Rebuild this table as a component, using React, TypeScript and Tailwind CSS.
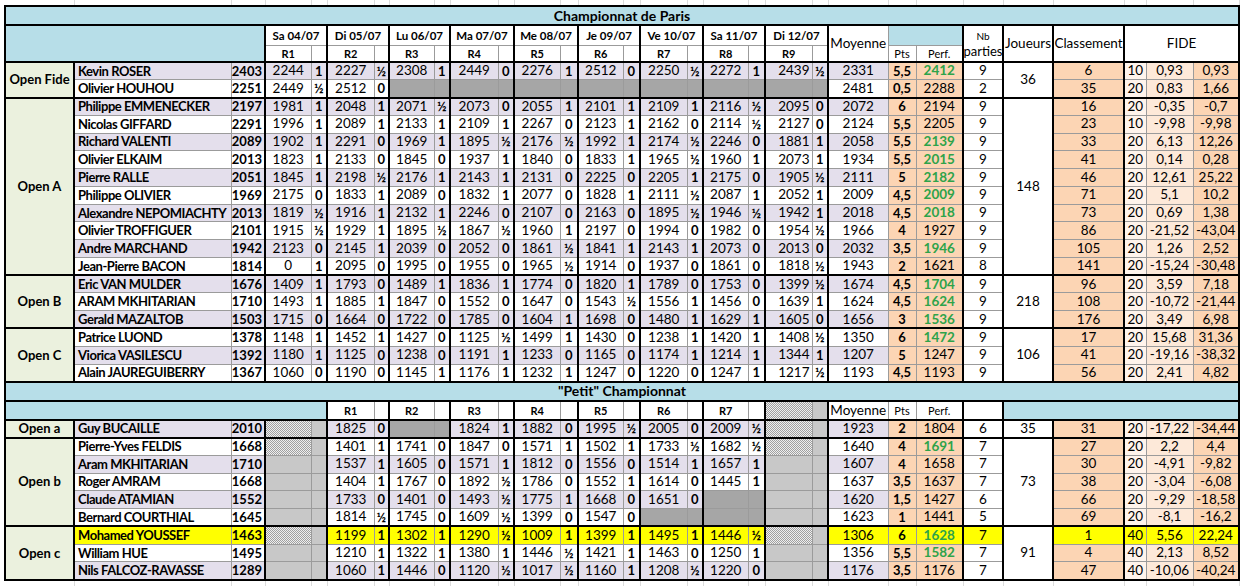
type Cell = [string, string] | 'g' | 'd';

interface Player {
  n: string;
  e: string;
  r: Cell[];
  m: string;
  pts: string;
  perf: string;
  gr?: boolean;
  nb: string;
  cl: string;
  k: string;
  d: string;
  t: string;
  y?: boolean;
}

interface Group {
  label: string;
  j: string;
  ps: Player[];
}

// "2244 1|2227 ½|g|d" -> rounds
function rr(s: string): Cell[] {
  return s.split('|').map((x) => {
    if (x === 'g' || x === 'd') return x;
    const [a, b] = x.split(' ');
    return [a, b];
  });
}

function pl(
  n: string,
  e: string,
  r: string,
  m: string,
  pts: string,
  perf: string,
  gr: boolean,
  nb: string,
  cl: string,
  k: string,
  d: string,
  t: string,
  y = false
): Player {
  return { n, e, r: rr(r), m, pts, perf, gr, nb, cl, k, d, t, y };
}

const main: Group[] = [
  {
    label: 'Open Fide',
    j: '36',
    ps: [
      pl('Kevin ROSER', '2403', '2244 1|2227 ½|2308 1|2449 0|2276 1|2512 0|2250 ½|2272 1|2439 ½', '2331', '5,5', '2412', true, '9', '6', '10', '0,93', '0,93'),
      pl('Olivier HOUHOU', '2251', '2449 ½|2512 0|g|g|g|g|g|g|g', '2481', '0,5', '2288', false, '2', '35', '20', '0,83', '1,66'),
    ],
  },
  {
    label: 'Open A',
    j: '148',
    ps: [
      pl('Philippe EMMENECKER', '2197', '1981 1|2048 1|2071 ½|2073 0|2055 1|2101 1|2109 1|2116 ½|2095 0', '2072', '6', '2194', false, '9', '16', '20', '-0,35', '-0,7'),
      pl('Nicolas GIFFARD', '2291', '1996 1|2089 1|2133 1|2109 1|2267 0|2123 1|2162 0|2114 ½|2127 0', '2124', '5,5', '2205', false, '9', '23', '10', '-9,98', '-9,98'),
      pl('Richard VALENTI', '2089', '1902 1|2291 0|1969 1|1895 ½|2176 ½|1992 1|2174 ½|2246 0|1881 1', '2058', '5,5', '2139', true, '9', '33', '20', '6,13', '12,26'),
      pl('Olivier ELKAIM', '2013', '1823 1|2133 0|1845 0|1937 1|1840 0|1833 1|1965 ½|1960 1|2073 1', '1934', '5,5', '2015', true, '9', '41', '20', '0,14', '0,28'),
      pl('Pierre RALLE', '2051', '1845 1|2198 ½|2176 1|2143 1|2131 0|2225 0|2205 1|2175 0|1905 ½', '2111', '5', '2182', true, '9', '46', '20', '12,61', '25,22'),
      pl('Philippe OLIVIER', '1969', '2175 0|1833 1|2089 0|1832 1|2077 0|1828 1|2111 ½|2087 1|2052 1', '2009', '4,5', '2009', true, '9', '71', '20', '5,1', '10,2'),
      pl('Alexandre NEPOMIACHTY', '2013', '1819 ½|1916 1|2132 1|2246 0|2107 0|2163 0|1895 ½|1946 ½|1942 1', '2018', '4,5', '2018', true, '9', '73', '20', '0,69', '1,38'),
      pl('Olivier TROFFIGUER', '2101', '1915 ½|1929 1|1895 ½|1867 ½|1960 1|2197 0|1994 0|1982 0|1954 ½', '1966', '4', '1927', false, '9', '86', '20', '-21,52', '-43,04'),
      pl('Andre MARCHAND', '1942', '2123 0|2145 1|2039 0|2052 0|1861 ½|1841 1|2143 1|2073 0|2013 0', '2032', '3,5', '1946', true, '9', '105', '20', '1,26', '2,52'),
      pl('Jean-Pierre BACON', '1814', '0 1|2095 0|1995 0|1955 0|1965 ½|1914 0|1937 0|1861 0|1818 ½', '1943', '2', '1621', false, '8', '141', '20', '-15,24', '-30,48'),
    ],
  },
  {
    label: 'Open B',
    j: '218',
    ps: [
      pl('Eric VAN MULDER', '1676', '1409 1|1793 0|1489 1|1836 1|1774 0|1820 1|1789 0|1753 0|1399 ½', '1674', '4,5', '1704', true, '9', '96', '20', '3,59', '7,18'),
      pl('ARAM MKHITARIAN', '1710', '1493 1|1885 1|1847 0|1552 0|1647 0|1543 ½|1556 1|1456 0|1639 1', '1624', '4,5', '1624', true, '9', '108', '20', '-10,72', '-21,44'),
      pl('Gerald MAZALTOB', '1503', '1715 0|1664 0|1722 0|1785 0|1604 1|1698 0|1480 1|1629 1|1605 0', '1656', '3', '1536', true, '9', '176', '20', '3,49', '6,98'),
    ],
  },
  {
    label: 'Open C',
    j: '106',
    ps: [
      pl('Patrice LUOND', '1378', '1148 1|1452 1|1427 0|1125 ½|1499 1|1430 0|1238 1|1420 1|1408 ½', '1350', '6', '1472', true, '9', '17', '20', '15,68', '31,36'),
      pl('Viorica VASILESCU', '1392', '1180 1|1125 0|1238 0|1191 1|1233 0|1165 0|1174 1|1214 1|1344 1', '1207', '5', '1247', false, '9', '41', '20', '-19,16', '-38,32'),
      pl('Alain JAUREGUIBERRY', '1367', '1060 0|1190 0|1145 1|1176 1|1232 1|1247 0|1220 0|1247 1|1217 ½', '1193', '4,5', '1193', false, '9', '56', '20', '2,41', '4,82'),
    ],
  },
];

const petit: Group[] = [
  {
    label: 'Open a',
    j: '35',
    ps: [pl('Guy BUCAILLE', '2010', 'd|1825 0|g|1824 1|1882 0|1995 ½|2005 0|2009 ½|d', '1923', '2', '1804', false, '6', '31', '20', '-17,22', '-34,44')],
  },
  {
    label: 'Open b',
    j: '73',
    ps: [
      pl('Pierre-Yves FELDIS', '1668', 'd|1401 1|1741 0|1847 0|1571 1|1502 1|1733 ½|1682 ½|d', '1640', '4', '1691', true, '7', '27', '20', '2,2', '4,4'),
      pl('Aram MKHITARIAN', '1710', 'd|1537 1|1605 0|1571 1|1812 0|1556 0|1514 1|1657 1|d', '1607', '4', '1658', false, '7', '30', '20', '-4,91', '-9,82'),
      pl('Roger AMRAM', '1668', 'd|1404 1|1767 0|1892 ½|1786 0|1552 1|1614 0|1445 1|d', '1637', '3,5', '1637', false, '7', '38', '20', '-3,04', '-6,08'),
      pl('Claude ATAMIAN', '1552', 'd|1733 0|1401 0|1493 ½|1775 1|1668 0|1651 0|g|d', '1620', '1,5', '1427', false, '6', '66', '20', '-9,29', '-18,58'),
      pl('Bernard COURTHIAL', '1645', 'd|1814 ½|1745 0|1609 ½|1399 0|1547 0|g|g|d', '1623', '1', '1441', false, '5', '69', '20', '-8,1', '-16,2'),
    ],
  },
  {
    label: 'Open c',
    j: '91',
    ps: [
      pl('Mohamed YOUSSEF', '1463', 'd|1199 1|1302 1|1290 ½|1009 1|1399 1|1495 1|1446 ½|d', '1306', '6', '1628', true, '7', '1', '40', '5,56', '22,24', true),
      pl('William HUE', '1495', 'd|1210 1|1322 1|1380 1|1446 ½|1421 1|1463 0|1250 1|d', '1356', '5,5', '1582', true, '7', '4', '40', '2,13', '8,52'),
      pl('Nils FALCOZ-RAVASSE', '1289', 'd|1060 1|1446 0|1120 ½|1017 ½|1160 1|1208 ½|1220 0|d', '1176', '3,5', '1176', false, '7', '47', '40', '-10,06', '-40,24'),
    ],
  },
];

const colW = [
  'w-[69px]', 'w-[157px]', 'w-[34px]',
  'w-[46px]', 'w-[16px]', 'w-[47px]', 'w-[15px]', 'w-[45px]', 'w-[16px]',
  'w-[48px]', 'w-[16px]', 'w-[46px]', 'w-[18px]', 'w-[45px]', 'w-[17px]',
  'w-[47px]', 'w-[16px]', 'w-[45px]', 'w-[17px]', 'w-[47px]', 'w-[16px]',
  'w-[60px]', 'w-[28px]', 'w-[47px]', 'w-[40px]', 'w-[50px]', 'w-[71px]',
  'w-[22px]', 'w-[47px]', 'w-[46px]',
];

const days = ['Sa 04/07', 'Di 05/07', 'Lu 06/07', 'Ma 07/07', 'Me 08/07', 'Je 09/07', 'Ve 10/07', 'Sa 11/07', 'Di 12/07'];

const TD = 'border border-[#9b9b9b] p-0 text-center';
const TR = 'border-r-2 border-r-black';
const TB = 'border-b-2 border-b-black';
const BLUE = 'bg-[#b7dee8]';
const PEACH = 'bg-[#fcd5b4]';
// excel "12.5% gray" fill
const DOTS = 'bg-[repeating-conic-gradient(#a0a0a0_0_25%,#efefef_0_50%)] bg-size-[2px_2px]';

function Spacer() {
  return (
    <tr className="h-[6px]">
      {colW.map((_, i) => (
        <td key={i} className="p-0 border-0 border-r border-r-[#dcdcdc]" />
      ))}
    </tr>
  );
}

function Title({ text }: { text: string }) {
  return (
    <tr className="h-[19px]">
      <td colSpan={30} className={`${TD} ${BLUE} border-2 border-black text-[14px] font-bold`}>
        {text}
      </td>
    </tr>
  );
}

function PlayerRow({ p, i, g, first, last }: { p: Player; i: number; g: Group; first: boolean; last: boolean }) {
  const stripe = p.y ? 'bg-[#ffff00]' : i % 2 === 0 ? 'bg-[#e4dfec]' : 'bg-white';
  const peach = p.y ? 'bg-[#ffff00]' : PEACH;
  const light = p.y ? 'bg-[#ffff00]' : 'bg-[#fde9d9]';
  const kbg = p.y ? 'bg-[#ffff00]' : 'bg-[#fff4ec]';
  const white = p.y ? 'bg-[#ffff00]' : 'bg-white';
  const b = last ? TB : '';
  return (
    <tr className="h-[17.78px]">
      {first && (
        <td
          rowSpan={g.ps.length}
          className={`${TD} ${TR} ${TB} border-l-2 border-l-black bg-[#ebf1de] text-[13px] font-bold`}
        >
          {g.label}
        </td>
      )}
      <td
        className={`${TD} ${b} ${stripe} text-left pl-[3px] text-[13px] font-bold tracking-[-0.45px] whitespace-nowrap overflow-hidden`}
      >
        {p.n}
      </td>
      <td className={`${TD} ${TR} ${b} ${stripe} text-right pr-[2px] text-[13px] font-bold`}>{p.e}</td>
      {p.r.map((c, k) =>
        c === 'g' ? (
          [
            <td key={k + 'a'} className={`${TD} ${b} bg-[#a6a6a6]`} />,
            <td key={k + 'b'} className={`${TD} ${TR} ${b} bg-[#a6a6a6]`} />,
          ]
        ) : c === 'd' ? (
          [
            <td key={k + 'a'} className={`${TD} ${b} ${DOTS}`} />,
            <td key={k + 'b'} className={`${TD} ${TR} ${b} ${DOTS}`} />,
          ]
        ) : (
          [
            <td
              key={k + 'a'}
              className={`${TD} ${b} ${stripe} text-[13.5px] ${k === 8 ? 'text-right pr-[2px]' : ''}`}
            >
              {c[0]}
            </td>,
            <td key={k + 'b'} className={`${TD} ${TR} ${b} ${stripe} text-[13px] font-bold`}>
              {c[1]}
            </td>,
          ]
        )
      )}
      <td className={`${TD} ${b} ${stripe} text-[13.5px]`}>{p.m}</td>
      <td className={`${TD} ${b} ${peach} text-[13px] font-bold`}>{p.pts}</td>
      <td className={`${TD} ${TR} ${b} ${peach} text-[13.5px] ${p.gr ? 'font-bold text-[#2ea34a]' : ''}`}>{p.perf}</td>
      <td className={`${TD} ${TR} ${b} ${white} text-[13.5px]`}>{p.nb}</td>
      {first && (
        <td rowSpan={g.ps.length} className={`${TD} ${TR} ${TB} bg-white text-[13.5px]`}>
          {g.j}
        </td>
      )}
      <td className={`${TD} ${TR} ${b} ${peach} text-[13.5px]`}>{p.cl}</td>
      <td className={`${TD} ${b} ${kbg} text-[13.5px]`}>{p.k}</td>
      <td className={`${TD} ${b} ${light} text-[13.5px]`}>{p.d}</td>
      <td className={`${TD} ${TR} ${b} ${peach} text-[13.5px]`}>{p.t}</td>
    </tr>
  );
}

function Body({ groups }: { groups: Group[] }) {
  let i = 0;
  return (
    <>
      {groups.map((g) =>
        g.ps.map((p, k) => (
          <PlayerRow key={p.n} p={p} i={i++} g={g} first={k === 0} last={k === g.ps.length - 1} />
        ))
      )}
    </>
  );
}

export default function App() {
  return (
    <div
      className="w-[1242px] h-[586px] overflow-hidden bg-white pl-[4px] text-black"
      style={{ fontFamily: 'Lato, "Noto Sans", sans-serif' }}
    >
      <table className="table-fixed border-collapse w-[1234px] leading-none">
        <colgroup>
          {colW.map((w, i) => (
            <col key={i} className={w} />
          ))}
        </colgroup>
        <tbody>
          <Spacer />
          <Title text="Championnat de Paris" />

          {/* dates */}
          <tr className="h-[20px]">
            <td colSpan={3} rowSpan={2} className={`${TD} ${TR} ${TB} border-l-2 border-l-black ${BLUE}`} />
            {days.map((d) => (
              <td key={d} colSpan={2} className={`${TD} ${TR} bg-white text-[11.5px] font-bold`}>
                {d}
              </td>
            ))}
            <td rowSpan={2} className={`${TD} ${TB} bg-white text-[13.5px]`}>
              Moyenne
            </td>
            <td colSpan={2} className={`${TD} ${TR} ${BLUE}`} />
            <td rowSpan={2} className={`${TD} ${TR} ${TB} bg-white`}>
              <div className="flex flex-col items-center leading-[15px]">
                <span className="text-[10px]">Nb</span>
                <span className="text-[13px]">parties</span>
              </div>
            </td>
            <td rowSpan={2} className={`${TD} ${TR} ${TB} bg-white text-[13.5px]`}>
              Joueurs
            </td>
            <td rowSpan={2} className={`${TD} ${TR} ${TB} bg-white text-[13.5px]`}>
              Classement
            </td>
            <td colSpan={3} rowSpan={2} className={`${TD} ${TR} ${TB} bg-white text-[13.5px]`}>
              FIDE
            </td>
          </tr>

          {/* rounds */}
          <tr className="h-[17px]">
            {days.map((d, k) => [
              <td key={d + 'r'} className={`${TD} ${TB} bg-white text-[11px] font-bold`}>
                R{k + 1}
              </td>,
              <td key={d + 'e'} className={`${TD} ${TR} ${TB} bg-white`} />,
            ])}
            <td className={`${TD} ${TB} bg-white text-[11px]`}>Pts</td>
            <td className={`${TD} ${TR} ${TB} bg-white text-[11px]`}>Perf.</td>
          </tr>

          <Body groups={main} />

          <Title text={'"Petit" Championnat'} />

          <tr className="h-[19px]">
            <td colSpan={5} className={`${TD} ${TR} ${TB} border-l-2 border-l-black ${BLUE}`} />
            {[1, 2, 3, 4, 5, 6, 7].map((n) => [
              <td key={n + 'r'} className={`${TD} ${TB} bg-white text-[11px] font-bold`}>
                R{n}
              </td>,
              <td key={n + 'e'} className={`${TD} ${TR} ${TB} bg-white`} />,
            ])}
            <td className={`${TD} ${TB} ${DOTS}`} />
            <td className={`${TD} ${TR} ${TB} ${DOTS}`} />
            <td className={`${TD} ${TB} bg-white text-[13.5px]`}>Moyenne</td>
            <td className={`${TD} ${TB} bg-white text-[11px]`}>Pts</td>
            <td className={`${TD} ${TR} ${TB} bg-white text-[11px]`}>Perf.</td>
            <td className={`${TD} ${TR} ${TB} bg-white`} />
            <td colSpan={5} className={`${TD} ${TR} ${TB} ${BLUE}`} />
          </tr>

          <Body groups={petit} />
          <Spacer />
        </tbody>
      </table>
    </div>
  );
}
